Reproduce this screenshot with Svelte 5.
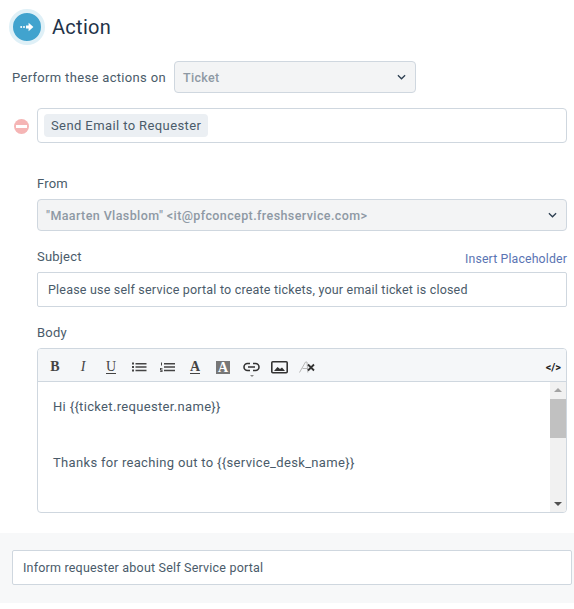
<script>
	const tools = ['bold', 'italic', 'underline', 'ul', 'ol', 'color', 'fill', 'link', 'image', 'clear'];
</script>

<div class="page">
	<section class="action">
		<header class="title">
			<span class="badge">
				<svg width="14" height="10" viewBox="0 0 14 10">
					<circle cx="1.2" cy="5" r="1" fill="#fff" />
					<circle cx="4" cy="5" r="1" fill="#fff" />
					<path d="M6 3.4h2.6V0.8L13.4 5 8.6 9.2V6.6H6z" fill="#fff" />
				</svg>
			</span>
			<h2>Action</h2>
		</header>

		<div class="perform">
			<span>Perform these actions on</span>
			<div class="select small">
				<b>Ticket</b>
				<svg class="chev" width="9" height="6" viewBox="0 0 10 6"><path d="M1 1l4 4 4-4" /></svg>
			</div>
		</div>

		<div class="picked">
			<span class="remove"><i></i></span>
			<div class="tagbox"><span class="tag">Send Email to Requester</span></div>
		</div>

		<div class="fields">
			<div class="label">From</div>
			<div class="select">
				<b class="from">"Maarten Vlasblom" &lt;it@pfconcept.freshservice.com&gt;</b>
				<svg class="chev" width="9" height="6" viewBox="0 0 10 6"><path d="M1 1l4 4 4-4" /></svg>
			</div>

			<div class="label subject">
				<span>Subject</span>
				<a href="#top">Insert Placeholder</a>
			</div>
			<div class="input">Please use self service portal to create tickets, your email ticket is closed</div>

			<div class="label body">Body</div>
			<div class="editor">
				<div class="toolbar">
					<div class="tools">
						{#each tools as tool}
							<span class="tool">
								{#if tool === 'bold'}
									<b class="serif">B</b>
								{:else if tool === 'italic'}
									<i class="serif">I</i>
								{:else if tool === 'underline'}
									<span class="serif under">U</span>
								{:else if tool === 'ul'}
									<svg width="15" height="10" viewBox="0 0 15 10">
										<path d="M0 0.500h2v2H0zM0 4h2v2H0zM0 7.500h2v2H0zM3.500 1h11v1.500h-11zM3.500 4.300h11v1.500h-11zM3.500 7.700h11v1.500h-11z" fill="#444" />
									</svg>
								{:else if tool === 'ol'}
									<svg width="15" height="10" viewBox="0 0 15 10">
										<path d="M4 1h11v1.500H4zM4 4.300h11v1.500H4zM4 7.700h11v1.500H4zM1 3.500h1v-3H1zM0 6h2.500v.7H1v.8h1.500V10H0v-.7h1.500v-.7H0z" fill="#444" />
									</svg>
								{:else if tool === 'color'}
									<span class="serif under heavy">A</span>
								{:else if tool === 'fill'}
									<span class="serif filled">A</span>
								{:else if tool === 'link'}
									<span class="linkicon">
										<svg width="17" height="10" viewBox="0 0 17 10">
											<path d="M7 1.500H4.500a3.500 3.500 0 0 0 0 7H7M10 1.500h2.500a3.500 3.500 0 0 1 0 7H10M5 5h7" fill="none" stroke="#333" stroke-width="1.600" />
										</svg>
										<span class="caret"></span>
									</span>
								{:else if tool === 'image'}
									<svg width="17" height="13" viewBox="0 0 17 13">
										<rect x="0.800" y="0.800" width="15.400" height="11" rx="1" fill="none" stroke="#333" stroke-width="1.600" />
										<path d="M3 10l3.500-4 2.500 2 2-1.500 3 3.500z" fill="#333" />
									</svg>
								{:else}
									<svg width="17" height="12" viewBox="0 0 17 12">
										<path d="M0.500 11.500L6.500 1H8l.8 10.500M3.500 7.500h5" fill="none" stroke="#b5b5b5" stroke-width="1" />
										<path d="M9 3.500l6 6M15 3.500l-6 6" fill="none" stroke="#333" stroke-width="1.800" />
									</svg>
								{/if}
							</span>
						{/each}
					</div>
					<span class="code">&lt;/&gt;</span>
				</div>
				<div class="content">
					<div class="text">
						<p>Hi {'{{'}ticket.requester.name{'}}'}</p>
						<p class="next">Thanks for reaching out to {'{{'}service_desk_name{'}}'}</p>
					</div>
					<div class="scrollbar">
						<span class="arrow up"></span>
						<span class="track"><span class="thumb"></span></span>
						<span class="arrow down"></span>
					</div>
				</div>
			</div>
		</div>
	</section>

	<footer class="band">
		<div class="input">Inform requester about Self Service portal</div>
	</footer>
</div>

<style>
	:global(body) {
		margin: 0;
		background: #fff;
	}

	.page {
		width: 574px;
		height: 609px;
		overflow: hidden;
		font-family: Roboto, "Liberation Sans", sans-serif;
		font-size: 13px;
		color: #4a5b6a;
	}

	.action {
		height: 533px;
		box-sizing: border-box;
		padding: 9px 7px 0 12px;
	}

	.title {
		display: flex;
		align-items: center;
		gap: 7px;
		height: 36px;
		margin-left: -3px;
	}

	.badge {
		box-sizing: content-box;
		width: 28px;
		height: 28px;
		border: 4px solid #dff0f7;
		border-radius: 50%;
		background: #41a3ce;
		display: flex;
		align-items: center;
		justify-content: center;
	}

	h2 {
		margin: 0;
		font-size: 20px;
		font-weight: 400;
		color: #1f3349;
		letter-spacing: 0.3px;
	}

	.perform {
		display: flex;
		align-items: center;
		gap: 8px;
		margin-top: 16px;
		letter-spacing: 0.33px;
	}

	.select {
		box-sizing: border-box;
		height: 32px;
		display: flex;
		align-items: center;
		justify-content: space-between;
		padding: 0 9px 0 8px;
		background: #f3f4f5;
		border: 1px solid #cfd7df;
		border-radius: 4px;
	}

	.select b {
		font-weight: 500;
		color: #8e99a4;
		font-size: 12.500px;
	}

	.select b.from {
		letter-spacing: 0.4px;
	}

	.select.small {
		width: 242px;
	}

	.chev path {
		fill: none;
		stroke: #2c3e50;
		stroke-width: 1.400;
	}

	.picked {
		display: flex;
		align-items: center;
		gap: 8px;
		margin-top: 15px;
		margin-left: 2px;
	}

	.remove {
		width: 15px;
		height: 15px;
		margin-top: 2px;
		border-radius: 50%;
		background: #f5b5b5;
		display: flex;
		align-items: center;
		justify-content: center;
	}

	.remove i {
		width: 11px;
		height: 3px;
		background: #fff;
	}

	.tagbox {
		box-sizing: border-box;
		flex: 1;
		height: 35px;
		display: flex;
		align-items: center;
		padding: 0 6px;
		border: 1px solid #cfd7df;
		border-radius: 4px;
	}

	.tag {
		padding: 4px 7px;
		background: #ebeff3;
		border-radius: 4px;
		letter-spacing: 0.4px;
	}

	.fields {
		margin-left: 25px;
		padding-top: 33px;
	}

	.label {
		height: 23px;
		line-height: 16px;
		letter-spacing: 0.2px;
	}

	.label.subject {
		display: flex;
		justify-content: space-between;
		margin-top: 18px;
		height: 23px;
	}

	.label.body {
		margin-top: 18px;
		height: 23px;
	}

	a {
		color: #5a74b3;
		text-decoration: none;
		font-size: 12.300px;
		padding-top: 2px;
		letter-spacing: 0.15px;
	}

	.input {
		box-sizing: border-box;
		height: 35px;
		display: flex;
		align-items: center;
		padding: 0 10px;
		border: 1px solid #cfd7df;
		border-radius: 2px;
		background: #fff;
		font-size: 12.500px;
		letter-spacing: 0.2px;
	}

	.editor {
		height: 165px;
		box-sizing: border-box;
		border: 1px solid #cfd7df;
		border-radius: 4px;
		overflow: hidden;
		display: flex;
		flex-direction: column;
	}

	.toolbar {
		flex: none;
		height: 33px;
		display: flex;
		align-items: center;
		justify-content: space-between;
		padding: 4px 5px 0 0;
		box-sizing: border-box;
		background: #f5f7f9;
		border-bottom: 1px solid #cfd7df;
	}

	.tools {
		display: flex;
		align-items: center;
		padding-left: 3px;
	}

	.tool {
		width: 28px;
		display: flex;
		justify-content: center;
		align-items: center;
		color: #444;
	}

	.serif {
		font-family: "Liberation Serif", serif;
		font-size: 14px;
		line-height: 14px;
	}

	.under {
		border-bottom: 1px solid #444;
		line-height: 12px;
	}

	.heavy {
		font-weight: bold;
	}

	.filled {
		background: #777;
		color: #fff;
		font-weight: bold;
		width: 14px;
		text-align: center;
		line-height: 13px;
	}

	.linkicon {
		position: relative;
		display: flex;
	}

	.caret {
		position: absolute;
		left: 7px;
		bottom: -5px;
		border-left: 2px solid transparent;
		border-right: 2px solid transparent;
		border-top: 2px solid #888;
	}

	.code {
		font-size: 11px;
		font-weight: 700;
		color: #222;
	}

	.content {
		flex: 1;
		display: flex;
		min-height: 0;
	}

	.text {
		flex: 1;
		padding: 16px 15px;
		letter-spacing: 0.33px;
	}

	p {
		margin: 0;
		line-height: 18px;
	}

	p.next {
		margin-top: 38px;
	}

	.scrollbar {
		width: 16px;
		background: #f1f1f1;
		display: flex;
		flex-direction: column;
		align-items: center;
	}

	.arrow {
		flex: none;
		width: 0;
		height: 0;
		border-left: 4px solid transparent;
		border-right: 4px solid transparent;
		margin: 6px 0;
	}

	.arrow.up {
		border-bottom: 4px solid #a3a3a3;
	}

	.arrow.down {
		border-top: 4px solid #505050;
	}

	.track {
		flex: 1;
		width: 100%;
	}

	.thumb {
		display: block;
		height: 39px;
		margin-top: 1px;
		background: #c1c1c1;
		width: 100%;
	}

	.band {
		height: 70px;
		box-sizing: border-box;
		padding: 17px 2px 0 12px;
		background: #f7f8f9;
	}
</style>
